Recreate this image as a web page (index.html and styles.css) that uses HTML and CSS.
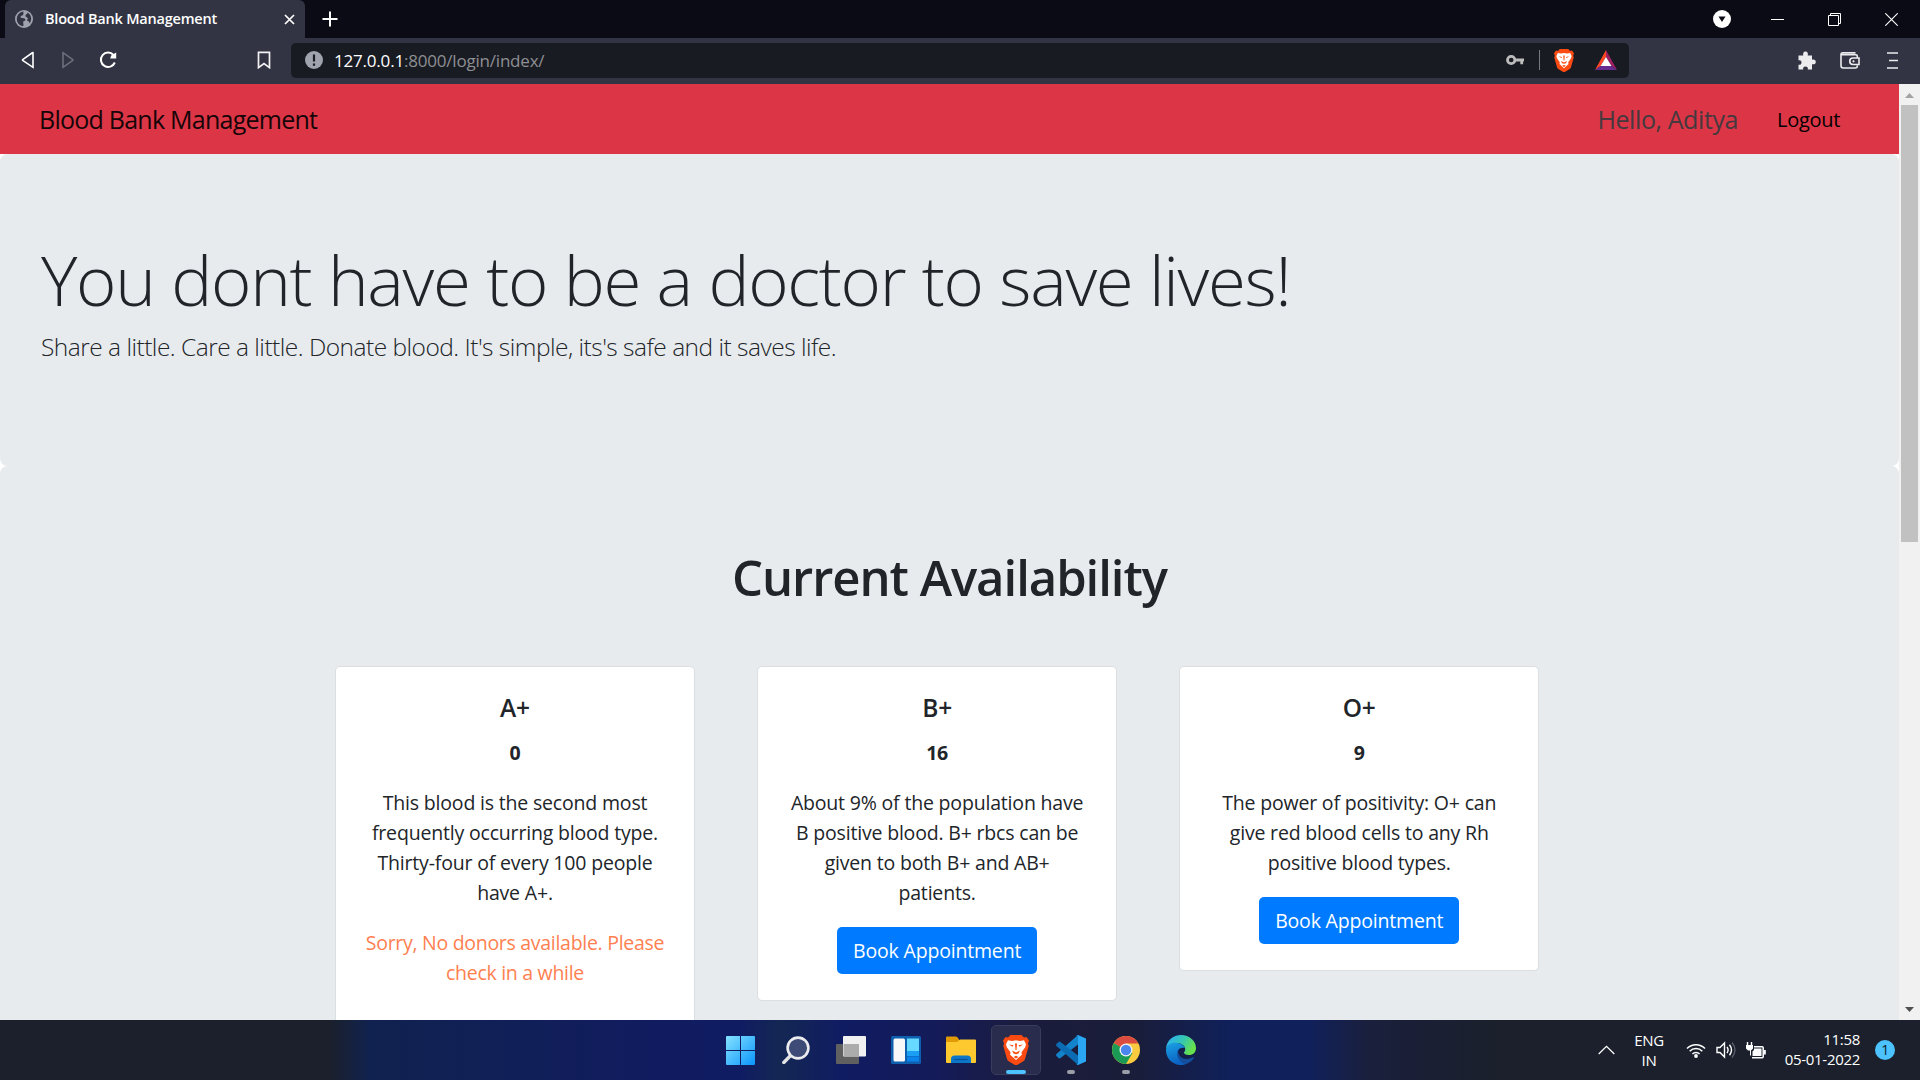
FILE: index.html
```html
<!DOCTYPE html>
<html lang="en">
<head>
<meta charset="utf-8">
<title>Blood Bank Management</title>
<link rel="stylesheet" href="styles.css">
</head>
<body>
<div class="screen">
  <header class="tabstrip">
    <div class="tab">
      <svg class="globe" width="18" height="18" viewBox="0 0 18 18"><circle cx="9" cy="9" r="9" fill="#9fa3ae"/><path d="M8.500 1.600c-.6 1.400.6 2-.4 3.200S5.600 5.400 5.600 7s3.600.6 4.600 1.900-.6 2.200-1.600 2.400.2 2.700-.2 4.800C4.500 15.900 1.800 12.800 1.800 9S4.600 2 8.500 1.600zM12.500 2.600c2.300 1.300 3.700 3.500 3.700 6.200 0 1.800-.7 3.500-1.800 4.800.1-1.500-.6-2.700-2-2.900s1-1.600.2-2.800-2.200-.8-2.200-2.200 2.300-1.400 2.100-3.100z" fill="#323443"/></svg>
      <span class="tab-title">Blood Bank Management</span>
      <svg class="tab-close" width="11" height="11" viewBox="0 0 11 11"><path d="M1 1l9 9M10 1l-9 9" stroke="#fff" stroke-width="1.700"/></svg>
    </div>
    <svg class="tab-new" width="16" height="16" viewBox="0 0 16 16"><path d="M8 .5v15M.5 8h15" stroke="#fff" stroke-width="2"/></svg>
    <div class="window-controls">
      <svg width="18" height="18" viewBox="0 0 18 18"><circle cx="9" cy="9" r="9" fill="#fff"/><path d="M5.500 6.500h7L9 12z" fill="#0b0b15"/></svg>
      <svg width="13" height="13" viewBox="0 0 13 13"><path d="M0 6.500h13" stroke="#fff"/></svg>
      <svg width="13" height="13" viewBox="0 0 13 13"><path d="M.5 2.500h10v10H.5zM2.500 2.500v-2h10v10h-2" fill="none" stroke="#fff"/></svg>
      <svg width="13" height="13" viewBox="0 0 13 13"><path d="M.3.3l12.400 12.400M12.700.3L.3 12.700" stroke="#fff" stroke-width="1.100"/></svg>
    </div>
  </header>

  <div class="toolbar">
    <svg class="back" width="14" height="18" viewBox="0 0 14 18"><path d="M12 1.700v14.600L2 9.700q-1-.7 0-1.400L11 2q1-.6 1-.3z" fill="none" stroke="#fff" stroke-width="1.600"/></svg>
    <svg class="forward" width="14" height="18" viewBox="0 0 14 18"><path d="M2 1.700v14.600l9.500-6.600q1-.7 0-1.400z" fill="none" stroke="#6d6f7b" stroke-width="1.600"/></svg>
    <svg class="reload" width="18" height="18" viewBox="0 0 18 18"><path d="M15.800 11.500A7.200 7.200 0 1 1 14.500 4" fill="none" stroke="#fff" stroke-width="2"/><path d="M17.200 1.500v6h-6l1-3z" fill="#fff"/></svg>
    <svg class="bookmark" width="14" height="18" viewBox="0 0 14 18"><path d="M1.500 1.400h11v15.200L7 12.500l-5.500 4.100z" fill="none" stroke="#f2f2f4" stroke-width="1.700"/></svg>
    <div class="address">
      <svg class="info" width="18" height="18" viewBox="0 0 18 18"><circle cx="9" cy="9" r="9" fill="#9fa3ae"/><path d="M9 3.500v7M9 12.500v2.200" stroke="#191b22" stroke-width="2.200"/></svg>
      <span class="url"><b>127.0.0.1</b>:8000/login/index/</span>
      <svg class="key" width="18" height="12" viewBox="0 0 18 12"><circle cx="5.200" cy="6" r="3.700" fill="none" stroke="#bcbcbc" stroke-width="2.800"/><path d="M9 6h9M15.700 6v4.200" stroke="#bcbcbc" stroke-width="2.800"/></svg>
      <span class="divider"></span>
      <svg class="lion" width="20" height="23" viewBox="0 0 26 30"><use href="#brave"/></svg>
      <svg class="rewards" width="22" height="20" viewBox="0 0 22 20"><path d="M11 0L0 20l5.500-4L11 7z" fill="#ff4724"/><path d="M11 0l11 20-5.500-4L11 7z" fill="#9e1f63"/><path d="M0 20h22l-5.500-4h-11z" fill="#662d91"/><path d="M11 7l5.500 9h-11z" fill="#fff"/></svg>
    </div>
    <div class="tools">
      <svg width="18" height="19" viewBox="0 0 18 19"><path d="M.5 4.500h4.800C4.600 2.300 5.500.5 7.500.5s2.900 1.800 2.200 4H14v4.200c2.200-.6 3.800.3 3.800 2.200S16.200 13.800 14 13.200v5.300H9.800c.4-1.800-.5-2.900-2.300-2.900s-2.700 1.100-2.300 2.900H.5v-4.800c1.900.4 3-.5 3-2.200S2.400 8.900.5 9.300z" fill="#ececef"/></svg>
      <svg width="20" height="17" viewBox="0 0 20 17"><path d="M17.300 5.500V4q0-1.200-1.500-1.200H3Q1 2.800 1 1.900T3 .9h12.500M1 2v11.800Q1 16 3.200 16h12q2.100 0 2.100-2v-.5M13 6h6v6.500h-6a3.200 3.200 0 0 1 0-6.500z" fill="none" stroke="#ececef" stroke-width="1.600"/><circle cx="13.500" cy="9.300" r="1.100" fill="#ececef"/></svg>
      <svg width="11" height="17" viewBox="0 0 11 17"><path d="M0 1h11M2 8.500h9M0 16h11" stroke="#ececef" stroke-width="1.700"/></svg>
    </div>
  </div>

  <div class="viewport">
    <main class="page">
      <nav class="navbar">
        <span class="brand">Blood Bank Management</span>
        <span class="hello">Hello, Aditya</span>
        <a class="logout">Logout</a>
      </nav>
      <section class="hero">
        <h1>You dont have to be a doctor to save lives!</h1>
        <p>Share a little. Care a little. Donate blood. It's simple, its's safe and it saves life.</p>
      </section>
      <section class="availability">
        <h2>Current Availability</h2>
        <div class="cards">
          <article class="card card-tall">
            <h3>A+</h3>
            <strong>0</strong>
            <p>This blood is the second most<br>frequently occurring blood type.<br>Thirty-four of every 100 people<br>have A+.</p>
            <p class="none">Sorry, No donors available. Please<br>check in a while</p>
          </article>
          <article class="card">
            <h3>B+</h3>
            <strong>16</strong>
            <p>About 9% of the population have<br>B positive blood. B+ rbcs can be<br>given to both B+ and AB+<br>patients.</p>
            <a class="btn">Book Appointment</a>
          </article>
          <article class="card">
            <h3>O+</h3>
            <strong>9</strong>
            <p>The power of positivity: O+ can<br>give red blood cells to any Rh<br>positive blood types.</p>
            <a class="btn">Book Appointment</a>
          </article>
        </div>
      </section>
    </main>
    <aside class="scrollbar">
      <svg width="21" height="21" viewBox="0 0 21 21"><path d="M6 14h9l-4.500-5z" fill="#a3a3a3"/></svg>
      <div class="thumb"></div>
      <svg class="down" width="21" height="21" viewBox="0 0 21 21"><path d="M6 8h9l-4.500 5z" fill="#505050"/></svg>
    </aside>
  </div>

  <footer class="taskbar">
    <div class="apps">
      <div class="app"><svg width="29" height="29" viewBox="0 0 29 29"><defs><linearGradient id="win" x2="1" y2="1"><stop stop-color="#86e2ff"/><stop offset="1" stop-color="#0a96fb"/></linearGradient></defs><path d="M1 0h13v14H0V1q0-1 1-1zM15 0h13q1 0 1 1v13H15zM0 15h14v14H1q-1 0-1-1zM15 15h14v13q0 1-1 1H15z" fill="url(#win)"/></svg></div>
      <div class="app"><svg width="28" height="28" viewBox="0 0 28 28"><path d="M1.800 26.500l7.500-7.700" stroke="#e3e3e6" stroke-width="3.400" stroke-linecap="round"/><circle cx="16" cy="12" r="10.400" fill="#3e4b77" stroke="#ececee" stroke-width="2.600"/></svg></div>
      <div class="app"><svg width="30" height="28" viewBox="0 0 30 28"><rect y="8" width="23" height="20" rx="1" fill="#606060"/><rect x="7" width="23" height="20.500" rx="1" fill="#f1f1f1"/><path d="M7.500 8H23v12H7.500z" fill="#acacac"/></svg></div>
      <div class="app"><svg width="30" height="28" viewBox="0 0 30 28"><rect width="30" height="28" rx="1.500" fill="#0f5faf"/><rect x="2.500" y="2.500" width="11.500" height="23" rx="1.500" fill="#f8f8f8"/><path d="M16 2.500h12V15H16z" fill="#67d8ff"/><path d="M16 15h12v5H16z" fill="#1a9ff5"/><path d="M16 20.500h12v5H16z" fill="#0a84ea"/></svg></div>
      <div class="app"><svg width="30" height="28" viewBox="0 0 30 28"><path d="M0 1.500Q0 .5 1 .5h9q1 0 2 1.500l1.500 2.500V10H0z" fill="#e09a05"/><path d="M0 6h11l3-2.500h15q1 0 1 1V26q0 1-1 1H1q-1 0-1-1z" fill="#fdc92f"/><path d="M5 27v-4q0-3.500 3.500-3.500h13Q25 19.500 25 23v4z" fill="#0c76c9"/><path d="M8.500 23.500h13" stroke="#0a4f95" stroke-width="1.200"/></svg></div>
      <div class="app active"><svg width="26" height="30" viewBox="0 0 26 30"><g id="brave"><path d="M7.500 0h11l2.500 2.500 2.500-.5L26 5.500l-1 3 .7 2.500-3.700 13q-.5 1.500-2 2.500l-5.500 3.300q-1.500.8-3 0L6 26.500q-1.500-1-2-2.500L.3 11 1 8.500l-1-3L2.500 2l2.500.5z" fill="#fb4b12"/><path d="M5 5.200l4 .8 4-.7 4 .7 4-.8 2 4-.8 3-3.700 5 .4 2.500-5.900 5.300-5.900-5.300.4-2.500-3.700-5-.8-3z" fill="#fff"/><path d="M6 9.500l4.500.8-1 1.500zM20 9.500l-4.500.8 1 1.500zM12 8.500h2l-.5 6.500h-1zM9 15.500l4 2 4-2-1.500 3-2.500.8-2.500-.8zM10.500 22l2.500-1.200 2.500 1.200-2.500 1.500z" fill="#fb4b12"/></g></svg><i></i></div>
      <div class="app"><svg width="30" height="30" viewBox="0 0 30 30"><path d="M22 0v9.500L4.500 23q-1 .8-2 0L.5 21q-.9-1 0-2z" fill="#1383cb"/><path d="M22 30v-9.500L4.500 7q-1-.8-2 0L.5 9q-.9 1 0 2z" fill="#0b6cb4"/><path d="M22 0l8 3.500v23L22 30q-1.500 0-2-.7 2 .5 2-1.300V2q0-1.800-2-1.300.5-.7 2-.7z" fill="#2aa6f2"/></svg><i class="dot"></i></div>
      <div class="app"><svg width="28" height="28" viewBox="0 0 28 28"><circle cx="14" cy="14" r="14" fill="#fcca3f"/><path d="M14 14L1.900 7A14 14 0 0 0 14 28l6.500-11z" fill="#1b9a55"/><path d="M14 14L1.900 7A14 14 0 0 1 26.400 7.500H14z" fill="#db4b3f"/><circle cx="14" cy="14" r="6.500" fill="#f5f5f5"/><circle cx="14" cy="14" r="5.200" fill="#4a86ee"/></svg><i class="dot"></i></div>
      <div class="app"><svg width="30" height="30" viewBox="0 0 30 30"><defs><linearGradient id="e1" x2="1" y2=".4"><stop offset=".2" stop-color="#2eb5e5"/><stop offset=".6" stop-color="#36c8ae"/><stop offset="1" stop-color="#66e04c"/></linearGradient><linearGradient id="e2" x2=".3" y2="1"><stop stop-color="#1ba3e4"/><stop offset="1" stop-color="#0b62c4"/></linearGradient></defs><path d="M0 14C.5 5.500 7 0 15 0c8.500 0 15 6 15 13 0 4.500-3 7-7 7-3.500 0-5-1.300-5-2.300 0-.9 1.200-1.300 1.200-3.700C19 10.500 15 8 10.500 8 5 8 1.500 11 0 14z" fill="url(#e1)"/><path d="M12.500 14.500c-1.500 5 2.500 9.500 8 9.500 3 0 5-1 7-1.700.5-.2.8.3.5.8C25 27.500 20.500 30 15 30c-6-2-8.500-10-2.500-15.500z" fill="#134f9e"/><path d="M0 14.500C1 10 5 7.500 10 7.700c4 .3 8 2.300 9 5.300-6-1.500-9 3.500-7.500 8.500 1 3.500 4 6.500 7 8C9.500 32-.5 25 0 14.500z" fill="url(#e2)"/></svg></div>
    </div>
    <div class="tray">
      <svg class="chevron" width="17" height="10" viewBox="0 0 17 10"><path d="M.7 9l7.800-7.600L16.300 9" fill="none" stroke="#fff" stroke-width="1.300"/></svg>
      <div class="lang">ENG<br>IN</div>
      <svg class="wifi" width="20" height="16" viewBox="0 0 20 16"><path d="M1 6.500a12.500 12.500 0 0 1 18 0M3.700 9.300a8.700 8.700 0 0 1 12.600 0M6.400 12a5 5 0 0 1 7.200 0" fill="none" stroke="#fff" stroke-width="1.500"/><circle cx="10" cy="14" r="1.900" fill="#fff"/></svg>
      <svg class="volume" width="20" height="18" viewBox="0 0 20 18"><path d="M1 6.500h3L8.500 2v14L4 11.500H1z" fill="none" stroke="#fff" stroke-width="1.400"/><path d="M11 6q2.200 3 0 6M13.500 3.800q4 5.200 0 10.400" fill="none" stroke="#fff" stroke-width="1.400"/><path d="M16 1.500q6 7.500 0 15" fill="none" stroke="#5a5f6b" stroke-width="1.300"/></svg>
      <svg class="battery" width="20" height="17" viewBox="0 0 20 17"><path d="M1.500 0v3M5.500 0v3" stroke="#fff" stroke-width="1.400"/><path d="M0 3h7v3.500L5 8.500v5H4v-5H2L0 6.500z" fill="#fff"/><path d="M8 4.700h8.200q1 0 1 1v9q0 1-1 1H6" fill="none" stroke="#fff" stroke-width="1.500"/><path d="M8 6.500h7.500V14H6.500V9.500L8 8zM18 8h1.800v4.500H18z" fill="#fff"/></svg>
      <div class="clock">11:58<br>05-01-2022</div>
      <div class="badge">1</div>
    </div>
  </footer>
</div>
</body>
</html>
```
FILE: styles.css
```css
* { box-sizing: border-box; }
body { margin: 0; font-family: "Open Sans", "Noto Sans", sans-serif; color: #212529; }
svg { display: block; flex: none; }
h1, h2, h3, p { margin: 0; }

.screen { display: flex; flex-direction: column; width: 1920px; height: 1080px; overflow: hidden; }

/* Browser tab strip */
.tabstrip { display: flex; align-items: center; height: 38px; padding: 0 22px 0 5px; background: #0b0b15; }
.tab { display: flex; align-items: center; align-self: stretch; width: 300px; padding: 0 10px; border-radius: 6px 6px 0 0; background: #323443; }
.tab-title { margin-left: 12px; padding-bottom: 1px; font-size: 14.5px; font-weight: 600; letter-spacing: -.2px; color: #fff; white-space: nowrap; }
.tab-close { margin-left: auto; }
.tab-new { margin-left: 17px; }
.window-controls { display: flex; align-items: center; gap: 44px; margin-left: auto; }
.window-controls svg:first-child { margin-right: -4px; }

/* Browser toolbar */
.toolbar { display: flex; align-items: center; height: 46px; padding: 0 22px 2px 21px; background: #323443; }
.forward { margin-left: 26px; }
.reload { margin-left: 24px; }
.bookmark { margin-left: 140px; }
.address { display: flex; align-items: center; width: 1338px; height: 35px; margin-left: 20px; padding: 0 12px 0 14px; border-radius: 5px; background: #191b22; }
.url { margin: 0 auto 0 11px; font-size: 17px; letter-spacing: -.2px; color: #8e8f93; white-space: nowrap; }
.url b { font-weight: 400; color: #fff; }
.divider { width: 1px; height: 20px; margin: 0 14px 0 15px; background: #77797e; }
.rewards { margin-left: 21px; }
.tools { display: flex; align-items: center; gap: 24px; margin-left: auto; }
.tools svg:last-child { margin-left: 3px; }

/* Page */
.viewport { display: flex; height: 936px; overflow: hidden; }
.page { flex: 1; overflow: hidden; background: #fff; }
.navbar { display: flex; align-items: center; height: 70px; padding: 0 59px 0 39px; background: #dc3545; font-size: 25px; }
.brand { letter-spacing: -.75px; color: #150508; }
.hello { margin-left: auto; letter-spacing: -.4px; color: #45393f; }
.logout { margin-left: 39px; font-size: 20px; letter-spacing: -.3px; color: #000; }

.hero { height: 312px; padding: 83px 40px 0 41px; border-radius: 7.5px; background: #e8ebee; white-space: nowrap; }
.hero h1 { font-size: 69px; font-weight: 300; letter-spacing: -1.32px; line-height: 84px; }
.hero p { margin-top: 7px; font-size: 24.5px; font-weight: 300; letter-spacing: -.51px; line-height: 38px; }
.availability { height: 900px; padding-top: 81px; border-radius: 7.5px; background: #e8ebee; }
.availability h2 { font-size: 49px; font-weight: 600; letter-spacing: -1.04px; line-height: 60px; text-align: center; }
.cards { display: flex; align-items: flex-start; gap: 62.5px; margin-top: 59px; padding-left: 335px; }
.card { display: flex; flex-direction: column; align-items: center; width: 360px; padding: 26px 24px; border: 1px solid #dcdfe2; border-radius: 5px; background: #fff; font-size: 19.5px; letter-spacing: -.18px; line-height: 30px; text-align: center; white-space: nowrap; }
.card + .card { margin-left: -.4px; }
.card-tall { height: 500px; }
.card h3 { font-size: 24.5px; font-weight: 600; line-height: 30px; }
.card strong { margin: 15px 0 20px; }
.none { margin-top: 20px; letter-spacing: -.29px; color: #ff7f50; }
.btn { height: 47px; margin-top: 19px; padding: 9px 16px 8px; border-radius: 5px; background: #007bff; color: #fff; }

.scrollbar { display: flex; flex-direction: column; width: 21px; background: #f1f1f1; }
.thumb { height: 437px; margin: 0 2px; background: #c1c1c1; }
.down { margin-top: auto; }

/* Desktop taskbar */
.taskbar { display: flex; height: 60px; padding-left: 713px; color: #fff; background: linear-gradient(90deg, #1b202c 0, #1b202c 330px, #10224f 370px, #111c60 660px, #101c62 740px, #142753 780px, #101c62 840px, #141b58 940px, #1b1c3e 1020px, #1a1d38 1130px, #0f205a 1230px, #10205a 1310px, #1a1f3c 1370px, #1b202c 1500px); }
.apps { display: flex; align-items: center; }
.app { display: flex; flex-direction: column; align-items: center; justify-content: center; position: relative; width: 55px; height: 60px; }
.active::before { content: ""; position: absolute; inset: 5px 2px 5px 3px; border: 1px solid #393c5a; border-radius: 5px; background: #292c4c; }
.active svg { position: relative; }
.app i { position: absolute; bottom: 6px; width: 20px; height: 4px; border-radius: 2px; background: #4cc2ff; }
.app .dot { width: 8px; background: #9a9ca8; }
.tray { display: flex; align-items: center; margin-left: auto; padding-right: 25px; font-size: 15px; line-height: 20px; letter-spacing: -.3px; }
.lang { width: 44px; margin: 0 15px 1px 12px; text-align: center; }
.volume { margin-left: 10px; }
.battery { margin-left: 10px; }
.clock { width: 94px; margin-bottom: 2px; text-align: right; }
.badge { width: 20px; height: 20px; margin-left: 15px; border-radius: 50%; background: #4cc2ff; color: #0d1a26; text-align: center; font-size: 14px; }
```
